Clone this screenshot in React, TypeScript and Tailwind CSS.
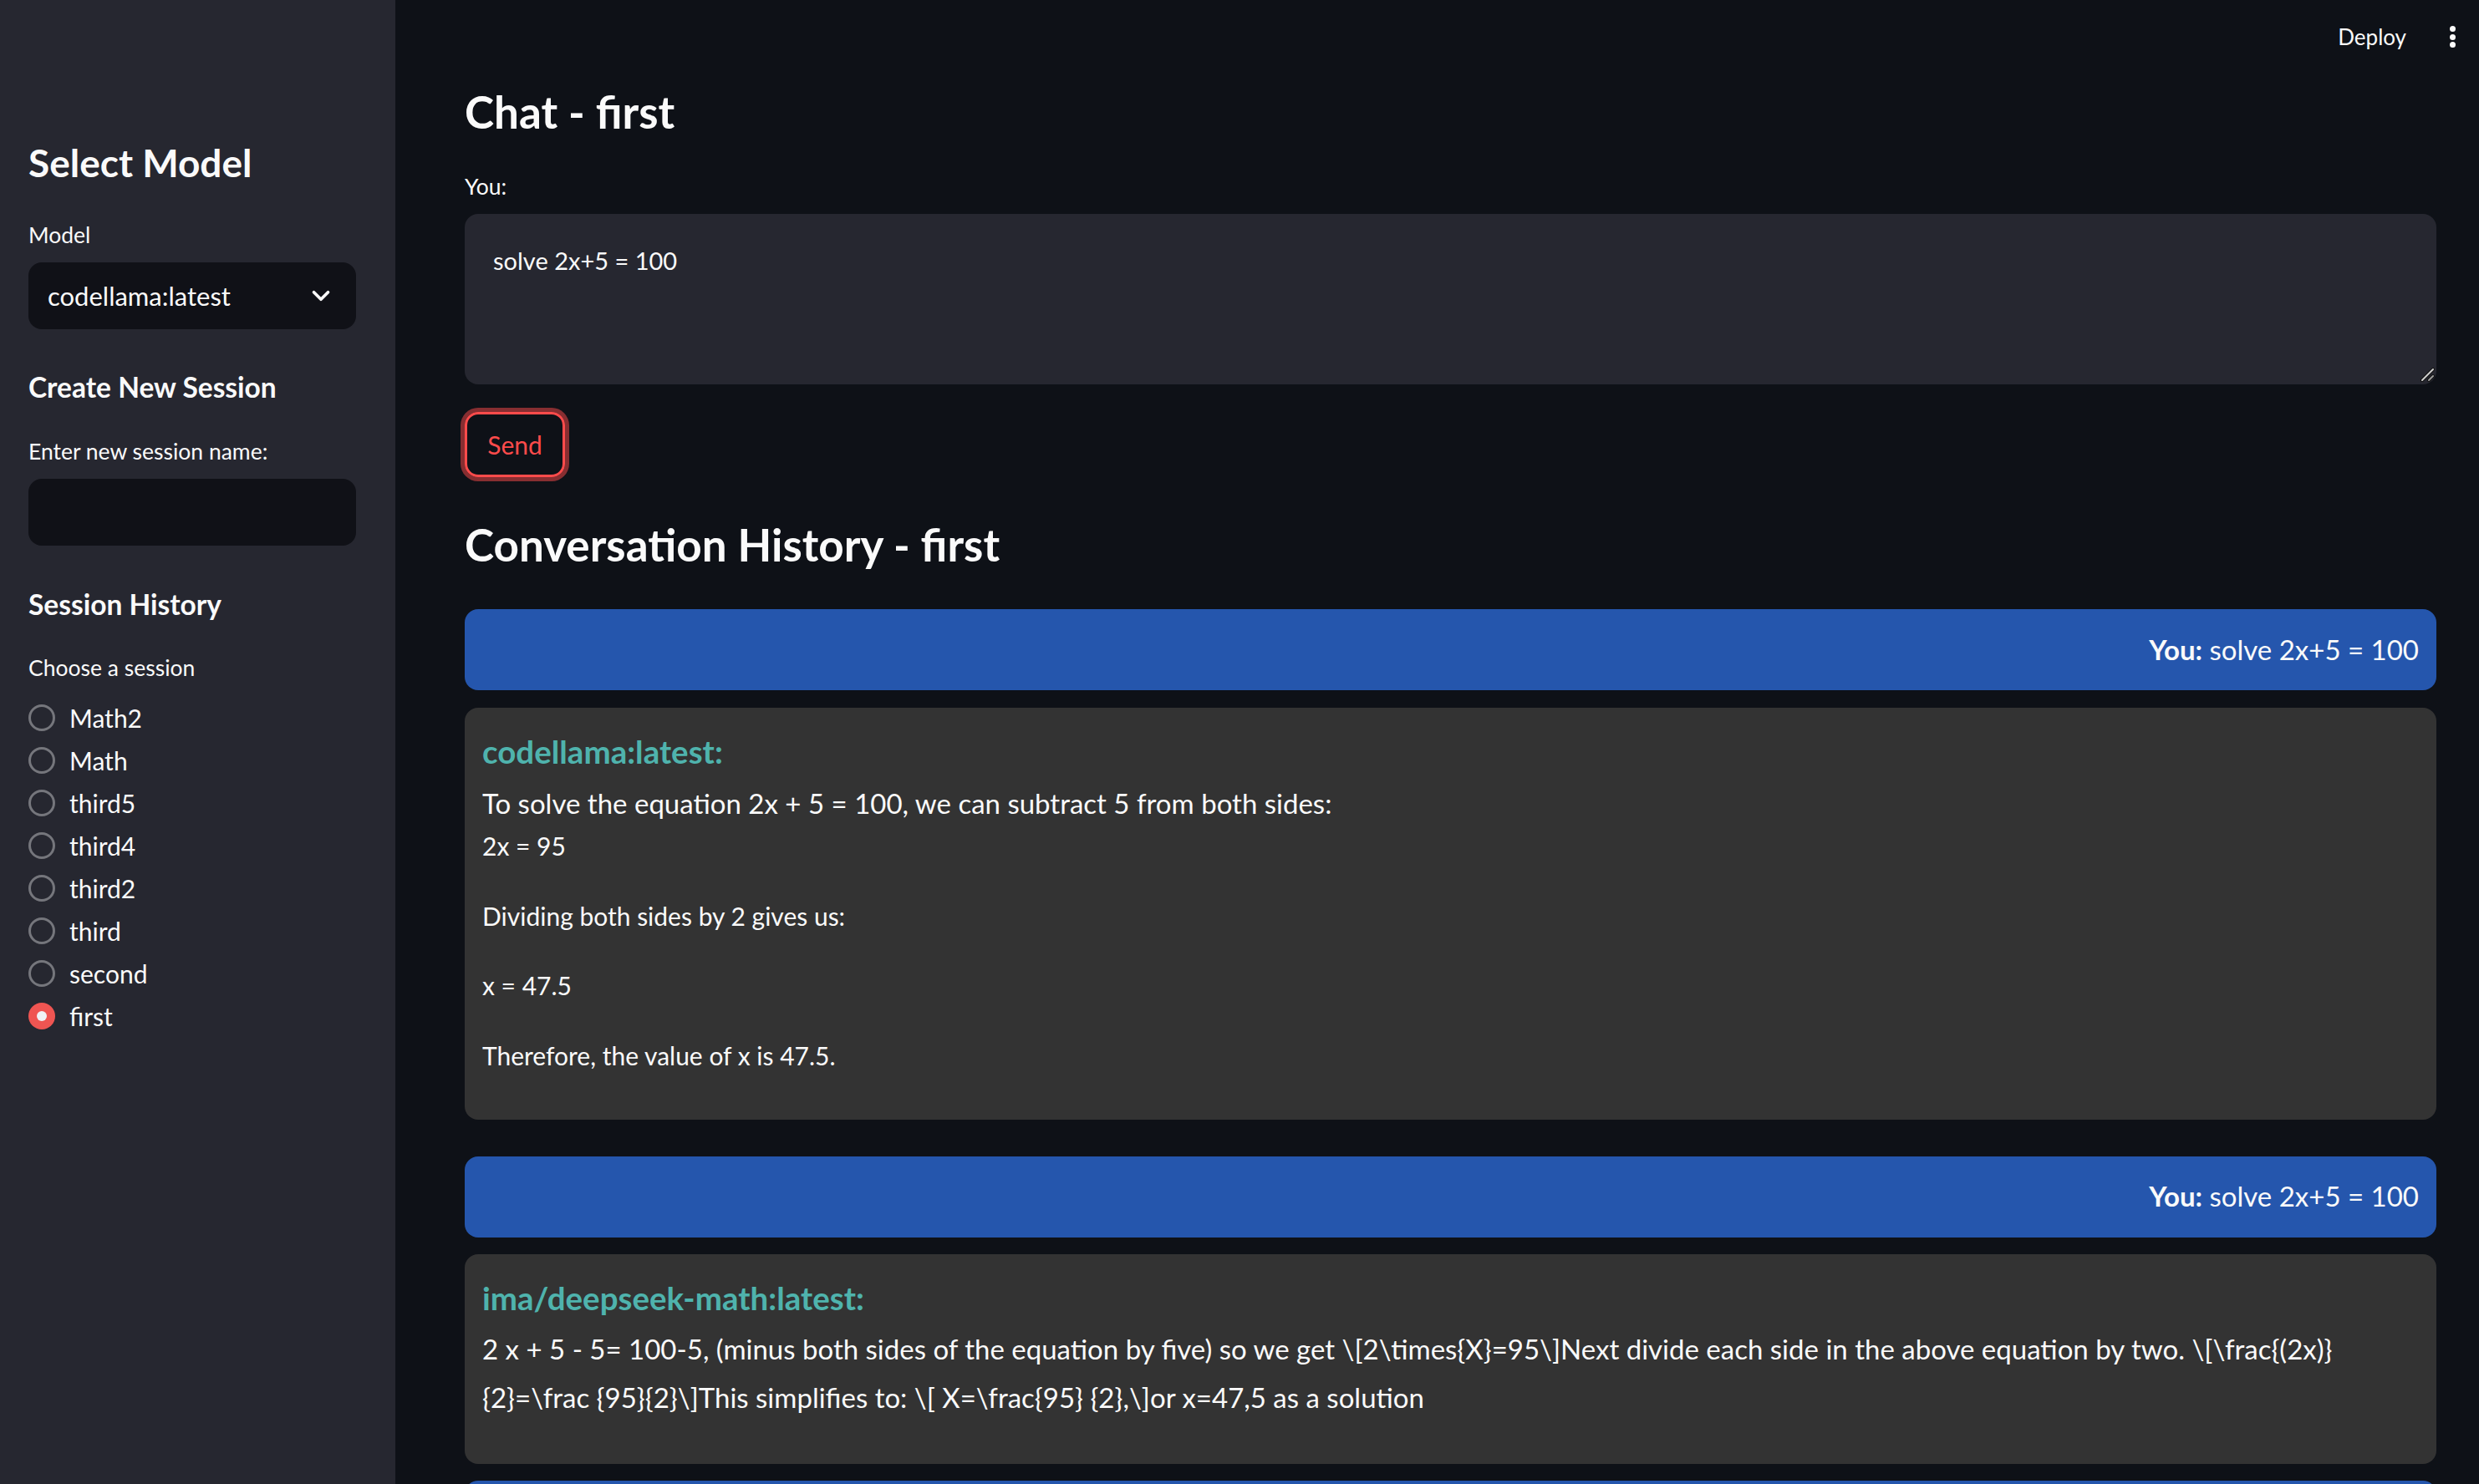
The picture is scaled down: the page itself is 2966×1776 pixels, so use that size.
import { ChevronDown } from 'lucide-react';

const sessions = ['Math2', 'Math', 'third5', 'third4', 'third2', 'third', 'second', 'first'];

const deepLine1 = String.raw`2 x + 5 - 5= 100-5, (minus both sides of the equation by five) so we get \[2\times{X}=95\]Next divide each side in the above equation by two. \[\frac{(2x)}`;
const deepLine2 = String.raw`{2}=\frac {95}{2}\]This simplifies to: \[ X=\frac{95} {2},\]or x=47,5 as a solution`;

function UserBubble({ text, className = '' }: { text?: string; className?: string }) {
  return (
    <div
      className={`flex h-[97px] shrink-0 items-center justify-end rounded-[16px] bg-[#2556ad] pr-[21px] text-[33px] text-[#fafafa] ${className}`}
    >
      {text && (
        <span>
          <b className="font-bold">You:</b> {text}
        </span>
      )}
    </div>
  );
}

function Radio({ label, checked }: { label: string; checked?: boolean }) {
  return (
    <div className="flex h-[51px] items-center gap-[17px]">
      {checked ? (
        <span className="flex h-[32px] w-[32px] items-center justify-center rounded-full bg-[#ef5552]">
          <span className="h-[12px] w-[12px] rounded-full bg-[#f0f2f6]" />
        </span>
      ) : (
        <span className="h-[32px] w-[32px] rounded-full border-[3px] border-[#75767c]" />
      )}
      <span className="text-[30px] leading-[40px]">{label}</span>
    </div>
  );
}

export default function App() {
  return (
    <div className="flex h-screen w-full overflow-hidden bg-[#0e1117] font-['Lato','Noto_Sans',sans-serif] text-[#fafafa]">
      {/* sidebar */}
      <aside className="flex h-full w-[473px] shrink-0 flex-col bg-[#262730] pl-[34px] pt-[168px]">
        <h2 className="text-[46px] leading-[54px] font-bold">Select Model</h2>
        <label className="mt-[41px] text-[26.5px] leading-[36px]">Model</label>
        <div className="mt-[15px] flex h-[80px] w-[392px] items-center justify-between rounded-[16px] bg-[#101117] pl-[23px] pr-[25px]">
          <span className="text-[31px]">codellama:latest</span>
          <ChevronDown size={34} strokeWidth={2.6} />
        </div>

        <h3 className="mt-[47px] text-[33.5px] leading-[44px] font-bold">Create New Session</h3>
        <label className="mt-[37px] text-[26.5px] leading-[36px]">Enter new session name:</label>
        <input
          className="mt-[15px] h-[80px] w-[392px] rounded-[16px] bg-[#101117] px-[23px] text-[30px] outline-none"
          defaultValue=""
        />

        <h3 className="mt-[48px] text-[33.5px] leading-[44px] font-bold">Session History</h3>
        <p className="mt-[36px] text-[26.5px] leading-[36px]">Choose a session</p>
        <div className="mt-[16px] flex flex-col">
          {sessions.map((s) => (
            <Radio key={s} label={s} checked={s === 'first'} />
          ))}
        </div>
      </aside>

      {/* main */}
      <main className="flex h-full min-w-0 flex-1 flex-col">
        <header className="flex h-[88px] shrink-0 items-center justify-end pr-[28px]">
          <span className="text-[26px]">Deploy</span>
          <div className="ml-[52px] flex flex-col gap-[2.5px]">
            <span className="h-[7px] w-[7px] rounded-full bg-[#fafafa]" />
            <span className="h-[7px] w-[7px] rounded-full bg-[#fafafa]" />
            <span className="h-[7px] w-[7px] rounded-full bg-[#fafafa]" />
          </div>
        </header>

        <div className="flex flex-col pl-[83px] pr-[51px]">
          <h2 className="mt-[14px] text-[53px] leading-[64px] font-bold">Chat - first</h2>
          <label className="mt-[39px] text-[26.5px] leading-[36px]">You:</label>
          <div className="relative mt-[15px]">
            <textarea
              className="block h-[204px] w-full resize-none rounded-[16px] bg-[#262730] pl-[34px] pt-[36px] text-[29px] leading-[40px] text-[#fafafa] outline-none"
              defaultValue="solve 2x+5 = 100"
            />
            {/* resize grip */}
            <svg className="absolute bottom-[3px] right-[2px]" width="18" height="18" viewBox="0 0 18 18">
              <path d="M3 16 L16 3" stroke="#111" strokeWidth="4" strokeLinecap="round" />
              <path d="M3 16 L16 3" stroke="#cfcfcf" strokeWidth="2" strokeLinecap="round" />
              <path d="M11 16 L16 11" stroke="#111" strokeWidth="4" strokeLinecap="round" />
              <path d="M11 16 L16 11" stroke="#9a9a9a" strokeWidth="2" strokeLinecap="round" />
            </svg>
          </div>
          <div className="mt-[33px] flex">
            <button className="flex h-[78px] w-[120px] items-center justify-center rounded-[16px] border-[3px] border-[#ff4b4b] text-[30px] text-[#ff4b4b] shadow-[0_0_0_5px_rgba(255,75,75,0.5)]">
              Send
            </button>
          </div>

          <h2 className="mt-[49px] text-[53px] leading-[64px] font-bold">Conversation History - first</h2>

          <UserBubble className="mt-[45px]" text="solve 2x+5 = 100" />

          <div className="mt-[21px] rounded-[16px] bg-[#333333] px-[21px] pb-[55px] pt-[28px]">
            <div className="mb-[9px] text-[38.5px] leading-[48px] font-bold text-[#4fb3ad]">codellama:latest:</div>
            <div className="text-[33px] leading-[58px]">
              To solve the equation 2x + 5 = 100, we can subtract 5 from both sides:
            </div>
            <div className="flex flex-col gap-[39.5px] text-[30px] leading-[44px]">
              <p>2x = 95</p>
              <p>Dividing both sides by 2 gives us:</p>
              <p>x = 47.5</p>
              <p>Therefore, the value of x is 47.5.</p>
            </div>
          </div>

          <UserBubble className="mt-[44px]" text="solve 2x+5 = 100" />

          <div className="mt-[20px] rounded-[16px] bg-[#333333] px-[21px] pb-[51px] pt-[28px]">
            <div className="mb-[8px] text-[38.5px] leading-[48px] font-bold text-[#4fb3ad]">ima/deepseek-math:latest:</div>
            <div className="text-[33px] leading-[58px]">
              {deepLine1}
              <br />
              {deepLine2}
            </div>
          </div>

          {/* next message, below the fold */}
          <UserBubble className="mt-[20px]" />
        </div>
      </main>
    </div>
  );
}
